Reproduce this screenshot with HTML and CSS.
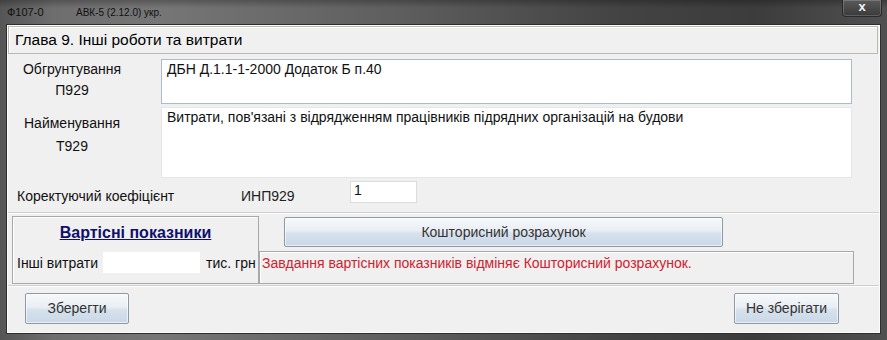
FILE: index.html
```html
<!DOCTYPE html>
<html lang="uk">
<head>
<meta charset="utf-8">
<title>Ф107-0</title>
<link rel="stylesheet" href="styles.css">
</head>
<body>
<div class="window">
  <div class="titlebar">
    <span class="t1">Ф107-0</span>
    <span class="t2">АВК-5 (2.12.0) укр.</span>
    <div class="close">x</div>
  </div>
  <div class="client">
    <div class="chapter">Глава 9. Інші роботи та витрати</div>
    <div class="fields">
      <div class="label lab1"><div>Обгрунтування</div><div>П929</div></div>
      <div class="textbox tb1">ДБН Д.1.1-1-2000 Додаток Б п.40</div>
      <div class="label lab2"><div>Найменування</div><div>Т929</div></div>
      <div class="textbox tb2">Витрати, пов'язані з відрядженням працівників підрядних організацій на будови</div>
    </div>
    <div class="coef">
      <span class="coef-label">Коректуючий коефіцієнт</span>
      <span class="coef-code">ИНП929</span>
      <div class="coef-input">1</div>
    </div>
    <div class="sep sep1"></div>
    <div class="bottom">
      <div class="group">
        <div class="group-title">Вартісні показники</div>
        <div class="group-row">
          <span class="cost-label">Інші витрати</span>
          <div class="cost-input"></div>
          <span class="cost-unit">тис. грн</span>
        </div>
      </div>
      <div class="right">
        <div class="btn btn-calc">Кошторисний розрахунок</div>
        <div class="message">Завдання вартісних показників відміняє Кошторисний розрахунок.</div>
      </div>
    </div>
    <div class="sep sep2"></div>
    <div class="actions">
      <div class="btn btn-save">Зберегти</div>
      <div class="btn btn-cancel">Не зберігати</div>
    </div>
  </div>
</div>
</body>
</html>
```
FILE: styles.css
```css
html, body {
  margin: 0;
  padding: 0;
}
body {
  font-family: "Liberation Sans", Arial, sans-serif;
  font-size: 14px;
  color: #111;
  background: #3a3a3a;
}
.window {
  width: 887px;
  height: 340px;
  box-sizing: border-box;
  padding: 0 7px 7px 7px;
  display: flex;
  flex-direction: column;
  background:
    linear-gradient(to bottom, rgba(0,0,0,0.25), rgba(0,0,0,0) 8px, rgba(0,0,0,0) 100%),
    linear-gradient(to right, #555 0%, #6e6e6e 6%, #767676 18%, #5e5e5e 45%, #434343 70%, #3c3c3c 85%, #505050 100%);
}
.titlebar {
  height: 25px;
  display: flex;
  align-items: flex-start;
  font-size: 10px;
  color: #101010;
}
.t1 {
  width: 69px;
  margin-top: 7px;
  font-size: 11px;
  margin-top: 6px;
}
.t2 {
  margin-top: 7px;
}
.close {
  margin-left: auto;
  margin-right: -2px;
  width: 40px;
  height: 17px;
  box-sizing: border-box;
  border: 1px solid #2a2a2a;
  border-top: none;
  border-radius: 0 0 4px 4px;
  background: linear-gradient(to bottom, #5a5a5a, #3a3a3a);
  box-shadow: inset 0 0 0 1px rgba(255,255,255,0.18);
  color: #f4f4f4;
  font-weight: bold;
  font-size: 13px;
  line-height: 14px;
  text-align: center;
}
.client {
  height: 308px;
  box-sizing: border-box;
  background: #f0f0f0;
  border: 1px solid #fafafa;
  box-shadow: 0 0 0 1px #2e2e2e;
  display: flex;
  flex-direction: column;
}
.chapter {
  height: 28px;
  box-sizing: border-box;
  margin: 0 1px 0 0;
  border: 1px solid #bdb8b2;
  box-shadow: inset 1px 1px 0 #fff;
  background: #f0f0f0;
  font-size: 15.5px;
  line-height: 26px;
  padding-left: 6px;
  color: #000;
}
.fields {
  margin-top: 5px;
  display: grid;
  grid-template-columns: 153px 691px;
  grid-template-rows: 45px 71px;
  row-gap: 3px;
}
.label {
  padding-right: 25px;
  text-align: center;
  color: #111;
}
.lab1 {
  line-height: 21px;
}
.lab2 {
  line-height: 23px;
  padding-top: 5px;
}
.textbox {
  box-sizing: border-box;
  background: #fff;
  padding: 1px 5px;
  line-height: 16px;
  color: #111;
}
.tb1 {
  border: 1px solid #a9bccf;
}
.tb2 {
  border: 1px solid #e6e6e6;
  padding-top: 1px;
}
.coef {
  margin-top: 3px;
  height: 24px;
  display: flex;
  align-items: flex-start;
}
.coef-label {
  width: 224px;
  padding-left: 9px;
  padding-top: 7px;
  line-height: 16px;
}
.coef-code {
  width: 109px;
  padding-top: 7px;
  line-height: 16px;
  color: #222;
}
.coef-input {
  width: 67px;
  height: 22px;
  box-sizing: border-box;
  background: #fff;
  border: 1px solid #dcdcdc;
  padding: 0 3px;
  line-height: 16px;
}
.sep {
  height: 0;
  border-top: 1px solid #cfcfcf;
  border-bottom: 1px solid #fdfdfd;
}
.sep1 {
  margin-top: 7px;
}
.bottom {
  margin-top: 2px;
  height: 68px;
  display: flex;
}
.group {
  margin-left: 4px;
  width: 247px;
  box-sizing: border-box;
  border: 1px solid #a8a8a8;
  box-shadow: inset 1px 1px 0 #fff;
}
.group-title {
  padding-top: 6px;
  text-align: center;
  font-size: 16px;
  line-height: 19px;
  font-weight: bold;
  color: #0f0f6e;
  text-decoration: underline;
}
.group-row {
  margin-top: 10px;
  height: 21px;
  display: flex;
  align-items: center;
  padding-left: 4px;
}
.cost-input {
  margin-left: 5px;
  width: 97px;
  height: 21px;
  background: #fff;
}
.cost-unit {
  margin-left: 6px;
}
.right {
  width: 595px;
  display: flex;
  flex-direction: column;
}
.btn {
  box-sizing: border-box;
  border: 1px solid #8e99a6;
  border-radius: 2px;
  background: linear-gradient(to bottom, #f7f9fb 0%, #e9eef4 45%, #d6e1ec 55%, #c9d7e6 100%);
  box-shadow: inset 0 0 0 1px rgba(255,255,255,0.6);
  color: #333;
  text-align: center;
}
.btn-calc {
  margin: 1px 0 0 25px;
  width: 439px;
  height: 30px;
  line-height: 28px;
}
.message {
  margin-top: 4px;
  height: 33px;
  box-sizing: border-box;
  border: 1px solid #a8a8a8;
  box-shadow: inset 1px 1px 0 #fff;
  padding: 3px 2px;
  line-height: 16px;
  color: #d1202e;
}
.sep2 {
  margin-top: 1px;
}
.actions {
  margin-top: 6px;
  display: flex;
  justify-content: space-between;
  padding: 0 40px 0 17px;
}
.btn-save {
  width: 104px;
  height: 31px;
  line-height: 29px;
}
.btn-cancel {
  width: 105px;
  height: 31px;
  line-height: 29px;
}
```
